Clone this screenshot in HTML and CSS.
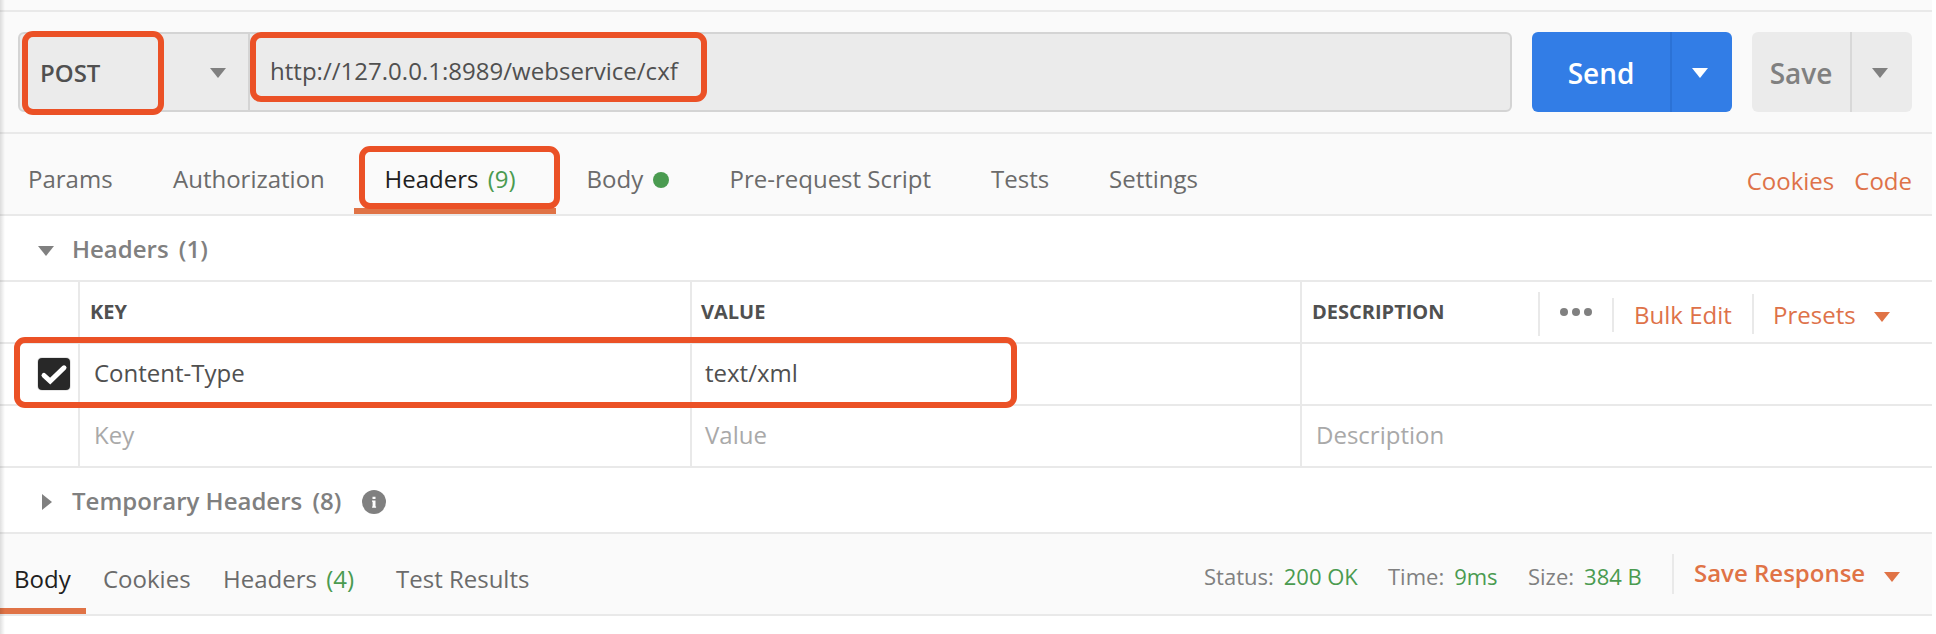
FILE: index.html
```html
<!DOCTYPE html>
<html lang="en">
<head>
<meta charset="utf-8">
<title>Request builder</title>
<link rel="stylesheet" href="styles.css">
</head>
<body>
<main class="app">
  <div class="strip"></div>

  <section class="request">
    <div class="request-field">
      <div class="method">
        <span class="method-name">POST</span>
        <svg class="caret" viewBox="0 0 16 10"><path d="M0 0h16L8 10z"/></svg>
      </div>
      <div class="url">http://127.0.0.1:8989/webservice/cxf</div>
    </div>
    <div class="button send">
      <span class="button-label">Send</span>
      <span class="button-menu"><svg class="caret" viewBox="0 0 16 10"><path d="M0 0h16L8 10z"/></svg></span>
    </div>
    <div class="button save">
      <span class="button-label">Save</span>
      <span class="button-menu"><svg class="caret" viewBox="0 0 16 10"><path d="M0 0h16L8 10z"/></svg></span>
    </div>
  </section>

  <nav class="tabs">
    <span class="tab t-params">Params</span>
    <span class="tab t-auth">Authorization</span>
    <span class="tab t-headers active">Headers <span class="count">(9)</span></span>
    <span class="tab t-body">Body<i class="dot"></i></span>
    <span class="tab t-pre">Pre-request Script</span>
    <span class="tab t-tests">Tests</span>
    <span class="tab t-settings">Settings</span>
    <span class="links"><span>Cookies</span><span>Code</span></span>
  </nav>

  <div class="group">
    <svg class="caret" viewBox="0 0 16 10"><path d="M0 0h16L8 10z"/></svg>
    <span class="group-name">Headers <span class="group-count">(1)</span></span>
  </div>

  <section class="table">
    <div class="row head">
      <div class="cell check"></div>
      <div class="cell">KEY</div>
      <div class="cell value">VALUE</div>
      <div class="cell last">
        <span class="desc">DESCRIPTION</span>
        <span class="more"><svg viewBox="0 0 32 8" width="32" height="8"><circle cx="4" cy="4" r="4"/><circle cx="16" cy="4" r="4"/><circle cx="28" cy="4" r="4"/></svg></span>
        <span class="bulk">Bulk Edit</span>
        <span class="presets">Presets<svg class="caret" viewBox="0 0 16 10"><path d="M0 0h16L8 10z"/></svg></span>
      </div>
    </div>
    <div class="row">
      <div class="cell check">
        <svg class="checkbox" viewBox="0 0 34 34"><rect class="ring" x="0" y="0" width="34" height="34" rx="5"/><rect class="box" x="1" y="1" width="32" height="32" rx="4"/><path d="M7 18.500l6.200 5.500L27 10.800"/></svg>
      </div>
      <div class="cell">Content-Type</div>
      <div class="cell value">text/xml</div>
      <div class="cell last"></div>
    </div>
    <div class="row empty">
      <div class="cell check"></div>
      <div class="cell">Key</div>
      <div class="cell value">Value</div>
      <div class="cell last">Description</div>
    </div>
  </section>

  <div class="group temporary">
    <svg class="caret-right" viewBox="0 0 10 16"><path d="M0 0v16l10-8z"/></svg>
    <span class="group-name">Temporary Headers <span class="group-count">(8)</span></span>
    <svg class="info" viewBox="0 0 24 24"><circle cx="12" cy="12" r="12"/><path d="M10.500 6.700h3v2.300h-3zM10 10.400h3.500v6h.6v1.400h-4v-1.400h.5v-4.600H10z"/></svg>
  </div>

  <section class="response">
    <span class="rtab r-body active">Body</span>
    <span class="rtab r-cookies">Cookies</span>
    <span class="rtab r-headers">Headers <span class="count">(4)</span></span>
    <span class="rtab r-results">Test Results</span>
    <div class="stats">
      <span class="s-status">Status:<b>200 OK</b></span>
      <span class="s-time">Time:<b>9ms</b></span>
      <span class="s-size">Size:<b>384 B</b></span>
    </div>
    <div class="save-response">Save Response<svg class="caret" viewBox="0 0 16 10"><path d="M0 0h16L8 10z"/></svg></div>
  </section>

  <div class="edge"></div>
  <div class="mark mark-method"></div>
  <div class="mark mark-url"></div>
  <div class="mark mark-tab"></div>
  <div class="mark mark-row"></div>
</main>
</body>
</html>
```
FILE: styles.css
```css
* { box-sizing: border-box; }

body {
  margin: 0;
  background: #fff;
  font-family: "Open Sans", "Noto Sans", sans-serif;
  font-size: 24px;
  line-height: 32px;
  color: #505050;
  overflow: hidden;
}

.app {
  position: relative;
  width: 1932px;
  height: 634px;
  white-space: nowrap;
}

svg { display: block; flex: none; }
.caret { width: 16px; height: 10px; fill: #808080; }
.count { color: #4a9b50; margin-left: 3px; }

.strip { height: 12px; background: #fafafa; border-bottom: 2px solid #e9e9e9; }

/* Request bar */
.request {
  display: flex;
  gap: 20px;
  height: 122px;
  padding: 20px 20px 0 18px;
  background: #fafafa;
  border-bottom: 2px solid #e9e9e9;
}
.request-field {
  display: flex;
  width: 1494px;
  height: 80px;
  background: #ebebeb;
  border: 2px solid #d4d4d4;
  border-radius: 6px;
}
.method {
  display: flex;
  justify-content: space-between;
  width: 230px;
  padding: 23px 22px 0 20px;
  border-right: 2px solid #d4d4d4;
  font-weight: 600;
}
.method .caret { margin-top: 11px; }
.url { padding: 21px 0 0 20px; letter-spacing: 0.02px; }

.button { display: flex; height: 80px; border-radius: 6px; font-size: 28px; line-height: 38px; font-weight: 600; }
.button-label { padding-top: 22px; text-align: center; }
.button-menu { flex: 1; display: flex; padding: 36px 0 0 20px; border-left: 2px solid; }
.send { width: 200px; background: #327de6; color: #fff; }
.send .button-label { width: 138px; }
.send .button-menu { border-color: #2b72d6; }
.send .caret { fill: #fff; }
.save { width: 160px; background: #ebebeb; color: #808080; }
.save .button-label { width: 98px; }
.save .button-menu { border-color: #d8d8d8; }

/* Request tabs */
.tabs {
  display: flex;
  height: 82px;
  background: #fafafa;
  border-bottom: 2px solid #e9e9e9;
  color: #6b6b6b;
}
.tab { height: 80px; padding: 29px 0 0 31px; }
.t-params { width: 145px; padding-left: 28px; }
.t-auth { width: 209px; padding-left: 28px; }
.t-headers { width: 202px; padding-left: 30.5px; }
.t-body { width: 144px; display: flex; padding-left: 30.5px; }
.t-pre { width: 260px; padding-left: 29.5px; }
.t-tests { width: 117px; }
.t-settings { width: 160px; padding-left: 32px; }
.tab.active { border-bottom: 6px solid #e07346; color: #202020; }
.dot { width: 16px; height: 16px; margin: 9px 0 0 10px; border-radius: 50%; background: #4a9b50; }
.links { display: flex; gap: 20px; margin-left: auto; padding: 31px 20px 0 0; color: #de7249; }

/* Collapsible groups */
.group { display: flex; height: 66px; padding: 17px 0 0 38px; border-bottom: 2px solid #e9e9e9; font-weight: 600; color: #808080; }
.group .caret { margin-top: 13px; }
.group-name { margin-left: 18px; }
.group-count { margin-left: 4px; }
.temporary { padding-left: 42px; }
.caret-right { width: 10px; height: 16px; margin-top: 9px; fill: #808080; }
.temporary .group-name { margin-left: 20px; }
.info { width: 24px; height: 24px; margin: 5px 0 0 21px; }
.info circle { fill: #808080; }
.info path { fill: #fff; }

/* Headers table */
.row { display: grid; grid-template-columns: 80px 612px 610px 1fr; height: 62px; border-bottom: 2px solid #e9e9e9; }
.cell { padding: 13px 0 0 14px; border-right: 2px solid #e9e9e9; }
.cell.value { padding-left: 13px; }
.cell.last { border-right: 0; }
.cell.check { padding: 13px 0 0 37px; }
.empty { color: #a9a9a9; }
.head { font-size: 20px; line-height: 28px; font-weight: 700; }
.head .cell { padding: 16px 0 0 10px; }
.head .cell.value { padding-left: 9px; }
.head .cell.last { display: flex; padding-top: 0; }
.desc { width: 226px; padding: 16px 0 0 0; }
.more { width: 74px; height: 44px; margin-top: 10px; padding: 16px 0 0 20px; border-left: 2px solid #e9e9e9; fill: #808080; }
.bulk, .presets { font-size: 24px; line-height: 32px; font-weight: 400; color: #de7249; border-left: 2px solid #e9e9e9; }
.bulk { width: 140px; height: 34px; margin-top: 16px; padding: 1px 0 0 20px; }
.presets { display: flex; width: 160px; height: 40px; margin-top: 12px; padding: 5px 0 0 19px; }
.presets .caret { margin: 13px 0 0 18px; fill: #e07346; }
.checkbox { width: 34px; height: 34px; }
.checkbox .ring { fill: #e6e6e6; }
.checkbox .box { fill: #282828; }
.checkbox path { fill: none; stroke: #fff; stroke-width: 5; stroke-linecap: round; }

/* Response bar */
.response { display: flex; height: 82px; background: #fafafa; border-bottom: 2px solid #e9e9e9; color: #6b6b6b; }
.rtab { height: 80px; padding-top: 29px; }
.rtab.active { color: #202020; border-bottom: 6px solid #e07346; }
.r-body { width: 86px; padding-left: 14px; }
.r-cookies { width: 137px; padding-left: 17px; }
.r-headers { width: 173px; }
.stats { display: flex; margin-left: auto; padding-top: 27px; font-size: 22px; line-height: 30px; color: #808080; }
.stats b { margin-left: 10px; font-weight: 400; color: #4a9b50; }
.s-status { width: 184px; }
.s-time { width: 140px; }
.s-size { width: 144px; }
.save-response { display: flex; width: 260px; height: 40px; margin-top: 20px; padding: 3px 0 0 20px; border-left: 2px solid #e9e9e9; font-weight: 600; color: #e07346; }
.save-response .caret { margin: 15px 0 0 19px; fill: #e07346; }

/* Pane shadow and highlight frames over the content */
.edge { position: absolute; left: 0; top: 0; width: 5px; height: 634px; background: linear-gradient(90deg, rgba(0,0,0,.12), transparent); }
.mark { position: absolute; border: 6px solid #eb5126; border-radius: 11px; }
.mark-method { left: 22px; top: 31px; width: 142px; height: 84px; }
.mark-url { left: 250px; top: 32px; width: 457px; height: 70px; }
.mark-tab { left: 359px; top: 146px; width: 201px; height: 63px; }
.mark-row { left: 14px; top: 337px; width: 1003px; height: 71px; }
```
